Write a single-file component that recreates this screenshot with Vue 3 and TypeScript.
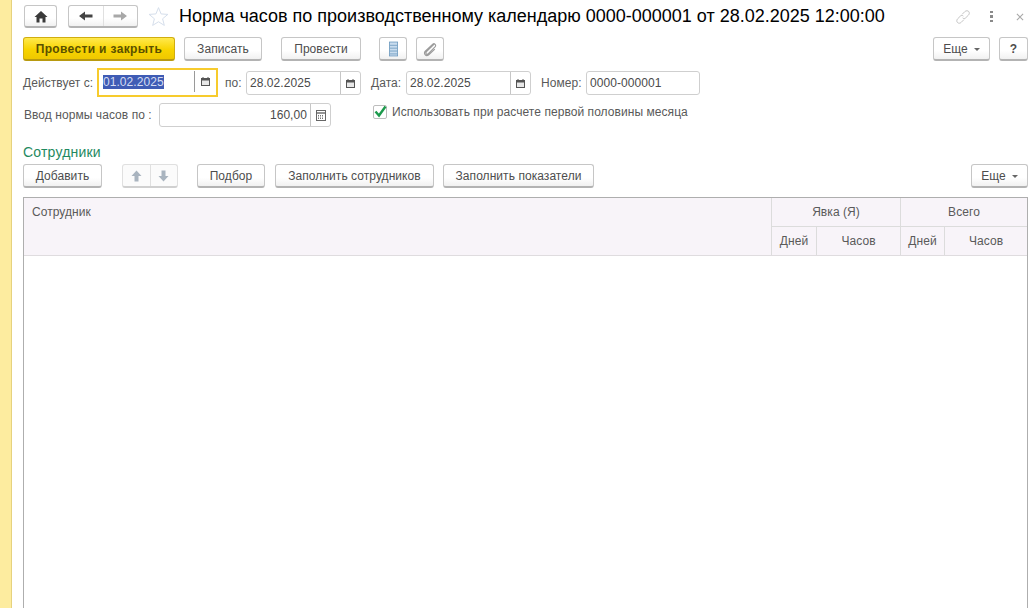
<script setup lang="ts">
const calendars = 1
</script>

<template>
  <div class="page">
    <aside class="side"></aside>
    <main class="main">
      <header class="titlebar">
        <button class="btn home" aria-label="Главная">
          <svg width="14" height="13" viewBox="0 0 14 13"><path d="M7 1 L13.5 7 H11.5 V12.5 H8.5 V8.5 H5.5 V12.5 H2.5 V7 H.5 Z" fill="#3a3a3a"/></svg>
        </button>
        <div class="btn nav">
          <span class="navcell"><svg width="14" height="10" viewBox="0 0 14 10"><path d="M0 5 L6 .5 V3.5 H13.5 V6.5 H6 V9.5 Z" fill="#444"/></svg></span>
          <span class="navcell"><svg width="14" height="10" viewBox="0 0 14 10"><path d="M14 5 L8 .5 V3.5 H.5 V6.5 H8 V9.5 Z" fill="#a8a8a8"/></svg></span>
        </div>
        <svg class="star" width="21" height="21" viewBox="0 0 22 21"><path d="M11 1.2 L13.7 7.8 L20.8 8.3 L15.3 12.9 L17.1 19.8 L11 16 L4.9 19.8 L6.7 12.9 L1.2 8.3 L8.3 7.8 Z" fill="#fff" stroke="#d3dcea"/></svg>
        <h1 class="title">Норма часов по производственному календарю 0000-000001 от 28.02.2025 12:00:00</h1>
        <div class="winicons">
          <svg width="16" height="16" viewBox="0 0 18 18" fill="none" stroke="#bcbcbc" stroke-width="1"><path d="M8 6 L11 3 C12.5 1.6 14.4 1.8 15.4 2.8 C16.4 3.9 16.4 5.6 15 7 L12 10 C10.8 11 9.4 11 8.6 10"/><path d="M10 12 L7 15 C5.6 16.4 3.8 16.2 2.8 15.2 C1.8 14.2 1.7 12.4 3 11 L6 8 C7.2 7 8.6 7 9.4 8"/></svg>
          <span class="dots"><i></i><i></i><i></i></span>
          <svg class="close" width="8" height="8" viewBox="0 0 9 9" stroke="#a8a8a8" stroke-width="1.2"><path d="M1 1 L8 8 M8 1 L1 8"/></svg>
        </div>
      </header>

      <div class="cmdbar">
        <button class="btn primary">Провести и закрыть</button>
        <button class="btn w-save">Записать</button>
        <button class="btn w-post">Провести</button>
        <button class="btn icon first">
          <svg width="9" height="16" viewBox="0 0 11 18"><rect x=".5" y=".5" width="10" height="17" fill="#c9dcee" stroke="#6d9abf"/><path d="M1 4.5 H10 M1 8 H10 M1 11.5 H10 M1 15 H10" stroke="#6d9abf"/></svg>
        </button>
        <button class="btn icon">
          <svg width="14" height="15" viewBox="0 0 16 17" fill="none" stroke="#9c9c9c" stroke-width="1.3"><path d="M12.5 2.5 L4 11 C2.7 12.5 3.6 14.6 5.6 13.8 L14 5.2 C15.2 3.6 13.2 .8 11.2 2.4 L2.6 10.5 C.4 13 3 17 6.3 14.8 L13.5 8"/></svg>
        </button>
        <span class="spacer"></span>
        <button class="btn more">Еще <i class="caret"></i></button>
        <button class="btn help">?</button>
      </div>

      <div class="fields">
        <label class="lbl l-from">Действует с:</label>
        <div class="focus">
          <span class="val"><mark>01.02.2025</mark></span>
          <span class="pick inner"><svg width="9" height="9" viewBox="0 0 9 9"><path d="M0 1 H9 V9 H0 Z" fill="#555"/><path d="M1 3.5 H8 V8 H1 Z" fill="#e8e8e8"/><path d="M2 0 V2 M7 0 V2" stroke="#555"/></svg></span>
        </div>
        <label class="lbl to">по:</label>
        <div class="field f-to">
          <span class="val">28.02.2025</span>
          <span class="pick"><svg width="9" height="9" viewBox="0 0 9 9"><path d="M0 1 H9 V9 H0 Z" fill="#555"/><path d="M1 3.5 H8 V8 H1 Z" fill="#e8e8e8"/><path d="M2 0 V2 M7 0 V2" stroke="#555"/></svg></span>
        </div>
        <label class="lbl dt">Дата:</label>
        <div class="field f-dt">
          <span class="val">28.02.2025</span>
          <span class="pick"><svg width="9" height="9" viewBox="0 0 9 9"><path d="M0 1 H9 V9 H0 Z" fill="#555"/><path d="M1 3.5 H8 V8 H1 Z" fill="#e8e8e8"/><path d="M2 0 V2 M7 0 V2" stroke="#555"/></svg></span>
        </div>
        <label class="lbl num">Номер:</label>
        <div class="field f-num"><span class="val">0000-000001</span></div>
      </div>

      <div class="fields second">
        <label class="lbl norm">Ввод нормы часов по :</label>
        <div class="field f-norm">
          <span class="val right">160,00</span>
          <span class="pick calc"><svg width="10" height="11" viewBox="0 0 10 11"><rect x=".5" y=".5" width="9" height="10" fill="#fff" stroke="#666"/><path d="M1 3 H9" stroke="#666" stroke-width="1.4"/><path d="M2 5.5 H8 M2 7 H8 M2 8.5 H8" stroke="#777" stroke-dasharray="1 1"/></svg></span>
        </div>
        <div class="check">
          <span class="box"><svg width="14" height="14" viewBox="0 0 14 14"><path d="M2.5 6.5 L6 10.5 L12.5 1.5" fill="none" stroke="#1c9a4c" stroke-width="2.4"/></svg></span>
          <span class="checktext">Использовать при расчете первой половины месяца</span>
        </div>
      </div>

      <h2 class="group">Сотрудники</h2>

      <div class="tablebar">
        <button class="btn add">Добавить</button>
        <div class="btn updown">
          <span class="navcell"><svg width="11" height="12" viewBox="0 0 11 12"><path d="M5.5 .5 L10.5 6 H7.5 V11.5 H3.5 V6 H.5 Z" fill="#a9b4bf"/></svg></span>
          <span class="navcell"><svg width="11" height="12" viewBox="0 0 11 12"><path d="M5.5 11.5 L10.5 6 H7.5 V.5 H3.5 V6 H.5 Z" fill="#a9b4bf"/></svg></span>
        </div>
        <button class="btn pick-btn">Подбор</button>
        <button class="btn fill-a">Заполнить сотрудников</button>
        <button class="btn fill-b">Заполнить показатели</button>
        <span class="spacer"></span>
        <button class="btn more2">Еще <i class="caret"></i></button>
      </div>

      <section class="table">
        <div class="thead">
          <div class="th emp">Сотрудник</div>
          <div class="th g1">Явка (Я)</div>
          <div class="th g2">Всего</div>
          <div class="th d1">Дней</div>
          <div class="th h1c">Часов</div>
          <div class="th d2">Дней</div>
          <div class="th h2c">Часов</div>
        </div>
      </section>
    </main>
  </div>
</template>

<style>
html, body { margin: 0; background: #fff; overflow: hidden; }
</style>

<style scoped>
.page { display: flex; width: 1035px; height: 608px; overflow: hidden; background: #fff; font: 12px "Liberation Sans", Arial, sans-serif; letter-spacing: .06px; color: #4d4d4d; }
.side { flex: 0 0 11px; width: 11px; background: #fdec9f; border-right: 1px solid #e6d27e; box-sizing: content-box; }
.main { flex: 1; min-width: 0; padding: 5px 7px 0 11px; display: flex; flex-direction: column; }
.btn { box-sizing: border-box; height: 24px; padding: 1px 0 0; display: inline-flex; align-items: center; justify-content: center; font: inherit; letter-spacing: inherit; color: #4d4d4d; background: linear-gradient(#fff 0 60%, #f1f1f1); border: 1px solid #c6c6c6; border-bottom: 2px solid #b3b3b3; border-radius: 3px; }
.titlebar { display: flex; align-items: center; height: 23px; }
.home { width: 33px; height: 23px; margin-left: 1px; }
.nav { width: 70px; height: 23px; margin-left: 11px; padding: 0; }
.navcell { flex: 1; height: 100%; display: flex; align-items: center; justify-content: center; }
.navcell + .navcell { border-left: 1px solid #e0e0e0; }
.star { margin-left: 10px; }
.title { margin: 0 0 0 10px; font: 400 18px "Liberation Sans", Arial, sans-serif; letter-spacing: 0; color: #000; white-space: nowrap; }
.winicons { margin-left: auto; display: flex; align-items: center; gap: 19px; padding-right: 4px; }
.close { margin-left: 4px; }
.dots { display: flex; flex-direction: column; gap: 2px; }
.dots i { width: 3px; height: 2.5px; background: #8a8a8a; display: block; }

.cmdbar { display: flex; height: 24px; margin-top: 9px; }
.primary { width: 152px; font-weight: 700; letter-spacing: .35px; color: #5a5000; background: linear-gradient(#ffe94d, #f8d400 55%, #efc800); border-color: #d0ad10; border-bottom-color: #b89a10; }
.w-save { width: 78px; margin-left: 9px; }
.w-post { width: 80px; margin-left: 19px; }
.icon { width: 28px; margin-left: 9px; }
.icon.first { margin-left: 18px; }
.spacer { flex: 1; }
.more { width: 57px; }
.help { width: 29px; margin-left: 9px; font-weight: 700; }
.caret { display: inline-block; margin-left: 6px; border: 3px solid transparent; border-top: 3px solid #666; border-bottom: 0; }

.fields { display: flex; align-items: center; height: 29px; margin-top: 7px; }
.fields > .field { margin-top: 1px; }
.lbl { white-space: nowrap; color: #595959; }
.l-from { width: 74px; }
.focus { box-sizing: border-box; width: 121px; height: 29px; border: 2px solid #f7cb2d; display: flex; align-items: stretch; padding: 1px 0 3px; }
.val { flex: 1; min-width: 0; padding-left: 3px; line-height: 22px; overflow: hidden; white-space: nowrap; color: #4a4a4a; }
.focus .val { padding-left: 4px; }
mark { background: #3f5cb5; color: #d5dcf2; }
.pick { box-sizing: border-box; flex: 0 0 20px; display: flex; align-items: center; justify-content: center; border-left: 1px solid #c6c6c6; }
.pick.inner { flex-basis: 22px; border-left-color: #9a9a9a; padding-right: 1px; }
.field { box-sizing: border-box; height: 24px; border: 1px solid #cfcfcf; border-radius: 3px; display: flex; align-items: stretch; background: #fff; }
.to { margin-left: 7px; width: 21px; }
.f-to { width: 115px; }
.dt { margin-left: 10px; width: 35px; }
.f-dt { width: 125px; }
.num { margin-left: 10px; width: 45px; }
.f-num { width: 114px; }

.second { margin-top: 6px; height: 24px; }
.second > .field { margin-top: 0; }
.norm { margin-left: 1px; width: 135px; }
.f-norm { width: 172px; }
.val.right { text-align: right; padding-right: 3px; }
.calc { flex-basis: 20px; }
.check { display: flex; align-items: center; margin-left: 42px; margin-top: -7px; }
.box { box-sizing: border-box; width: 14px; height: 14px; border: 1px solid #bdbdbd; border-radius: 2px; background: #fff; display: flex; }
.box svg { flex: none; margin: -1px; }
.checktext { margin-left: 5px; color: #595959; white-space: nowrap; }

.group { margin: 17px 0 0; font: 400 14px/17px "Liberation Sans", Arial, sans-serif; letter-spacing: .2px; color: #1f8a5f; }
.tablebar { display: flex; height: 24px; margin-top: 3px; }
.add { width: 79px; }
.updown { width: 56px; margin-left: 20px; padding: 0; border-color: #e0e0e0; border-bottom-color: #d0d0d0; background: #fbfbfb; }
.pick-btn { width: 68px; margin-left: 19px; }
.fill-a { width: 159px; margin-left: 10px; }
.fill-b { width: 151px; margin-left: 9px; }
.more2 { width: 57px; }

.table { box-sizing: border-box; margin-top: 9px; flex: 1; min-height: 0; border: 1px solid #aeaeae; border-bottom: 0; }
.thead { display: grid; grid-template-columns: 747px 45px 84px 44px 83px; grid-template-rows: 29px 28px; background: #f8f4f9; border-bottom: 1px solid #dfdcdf; color: #5a5a5a; }
.th { box-sizing: border-box; display: flex; align-items: center; justify-content: center; border-left: 1px solid #dcdcdc; }
.emp { grid-row: 1 / 3; grid-column: 1; border-left: 0; align-items: flex-start; justify-content: flex-start; padding: 7px 0 0 8px; }
.g1 { grid-column: 2 / 4; grid-row: 1; border-bottom: 1px solid #dcdcdc; }
.g2 { grid-column: 4 / 6; grid-row: 1; border-bottom: 1px solid #dcdcdc; }
.d1 { grid-column: 2; grid-row: 2; }
.h1c { grid-column: 3; grid-row: 2; }
.d2 { grid-column: 4; grid-row: 2; }
.h2c { grid-column: 5; grid-row: 2; }
</style>
